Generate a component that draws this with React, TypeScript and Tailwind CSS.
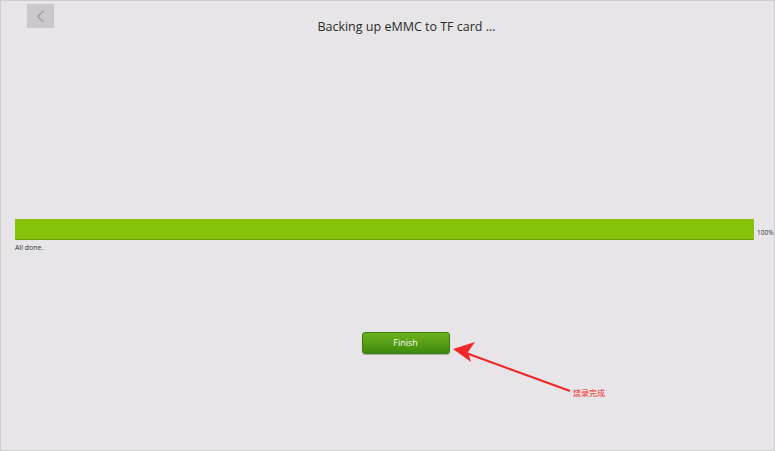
import { ChevronLeft } from "lucide-react";

export default function App() {
  return (
    <div
      className="relative w-[775px] h-[451px] overflow-hidden border border-[#cfcdd0] bg-[#e7e5e7]"
      style={{ fontFamily: '"Open Sans", "Noto Sans", sans-serif' }}
    >
      {/* Header */}
      <div className="flex items-start h-[38px] pt-[3px] pl-[26px]">
        <button className="w-[27px] h-[24px] bg-[#cac8cb] flex items-center justify-center">
          <ChevronLeft className="w-[21px] h-[21px] text-[#9f9da0]" strokeWidth={1.6} />
        </button>
        <div className="flex-1 text-center pr-[15px] pt-[14px] text-[12.5px] leading-[18px] text-[#2a2a2a]">
          Backing up eMMC to TF card ...
        </div>
      </div>

      {/* Progress */}
      <div className="mt-[180px] pl-[14px]">
        <div className="flex items-end gap-[3px]">
          <div className="shrink-0 w-[739px] h-[21px] bg-[#87c30b] border-b border-[#6fa208]" />
          <span className="shrink-0 text-[6.5px] text-[#333] leading-none mb-[4px]">100%</span>
        </div>
        <div className="mt-[4px] text-[7px] text-[#333] leading-none">All done.</div>
      </div>

      {/* Finish button */}
      <div className="flex justify-center mt-[81px] pl-[36px]">
        <button className="w-[88px] h-[22px] rounded-[3px] bg-gradient-to-b from-[#6cb21c] to-[#3f8a0e] border border-[#3b7d10] text-white text-[9px] shadow-[0_1px_1px_rgba(0,0,0,0.25)]">
          Finish
        </button>
      </div>

      {/* Annotation arrow */}
      <svg className="absolute left-0 top-0" width="775" height="451" viewBox="0 0 775 451">
        <line x1="569" y1="390" x2="465" y2="352" stroke="#f0282a" strokeWidth="2.2" />
        <polygon points="452,348 474,341 467,351 470,361" fill="#f0282a" />
      </svg>
      <div
        className="absolute left-[572px] top-[388px] text-[8px] text-[#f0282a] leading-none"
        style={{ fontFamily: '"Noto Sans CJK SC", sans-serif' }}
      >
        烧录完成
      </div>
    </div>
  );
}
